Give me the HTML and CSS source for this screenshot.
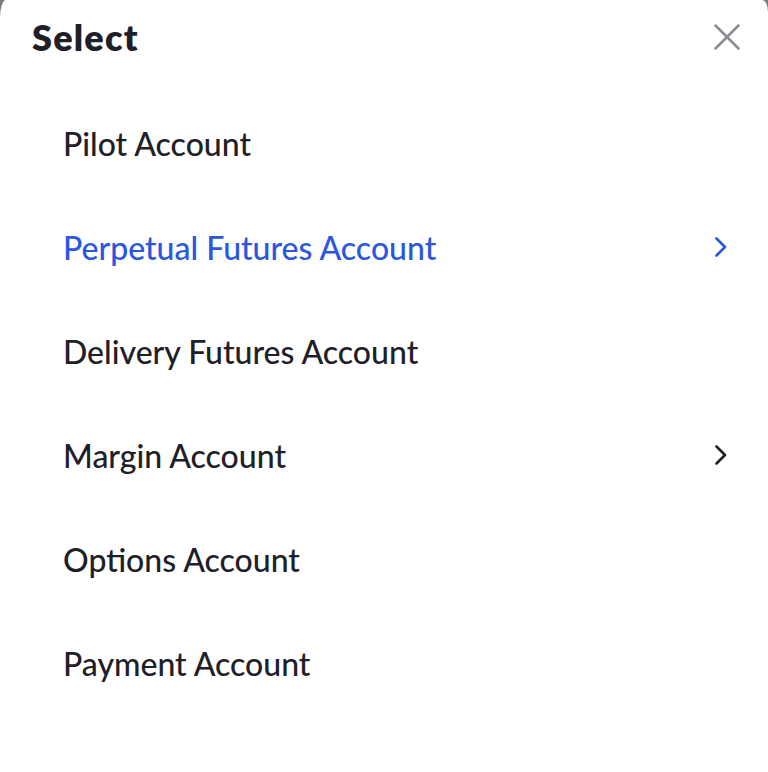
FILE: index.html
```html
<!DOCTYPE html>
<html>
<head>
<meta charset="utf-8">
<link rel="stylesheet" href="styles.css">
</head>
<body>
<div class="sheet">
  <header class="head">
    <h1 class="title">Select</h1>
    <button class="close" aria-label="Close">
      <svg width="26" height="26" viewBox="0 0 26 26"><path d="M1.5 1.5 L24.5 24.5 M24.5 1.5 L1.5 24.5" stroke="#8a8c93" stroke-width="2.5" stroke-linecap="round" fill="none"/></svg>
    </button>
  </header>
  <ul class="list">
    <li class="item">Pilot Account</li>
    <li class="item active">Perpetual Futures Account
      <svg class="chev" width="14" height="22" viewBox="0 0 14 22"><path d="M2.5 2.5 L11 11 L2.5 19.5" stroke="currentColor" stroke-width="2.6" stroke-linecap="round" stroke-linejoin="round" fill="none"/></svg>
    </li>
    <li class="item">Delivery Futures Account</li>
    <li class="item">Margin Account
      <svg class="chev" width="14" height="22" viewBox="0 0 14 22"><path d="M2.5 2.5 L11 11 L2.5 19.5" stroke="currentColor" stroke-width="2.6" stroke-linecap="round" stroke-linejoin="round" fill="none"/></svg>
    </li>
    <li class="item">Options Account</li>
    <li class="item">Payment Account</li>
  </ul>
</div>
</body>
</html>
```
FILE: styles.css
```css
html, body {
  margin: 0;
  padding: 0;
  background: #7a7b7f;
}
body {
  width: 768px;
  height: 772px;
  overflow: hidden;
  font-family: Lato, "Noto Sans", sans-serif;
  color: #1e2028;
}
.sheet {
  background: #fff;
  height: 772px;
  border-top-left-radius: 6px 18px;
  border-top-right-radius: 6px 12px;
}
.head {
  display: flex;
  align-items: center;
  justify-content: space-between;
  height: 74px;
  padding: 0 28px 0 32px;
}
.title {
  margin: 0;
  font-size: 36px;
  font-weight: 800;
  letter-spacing: 1.2px;
}
.close {
  border: 0;
  background: none;
  padding: 0;
  display: flex;
}
.list {
  list-style: none;
  margin: 0;
  padding: 17px 0 0;
}
.item {
  display: flex;
  align-items: center;
  justify-content: space-between;
  height: 104px;
  padding: 0 40px 0 63px;
  font-size: 32px;
  font-weight: 500;
}
.active {
  color: #2a57de;
}
.chev {
  color: #1e2028;
}
.active .chev {
  color: #2a57de;
}
```
